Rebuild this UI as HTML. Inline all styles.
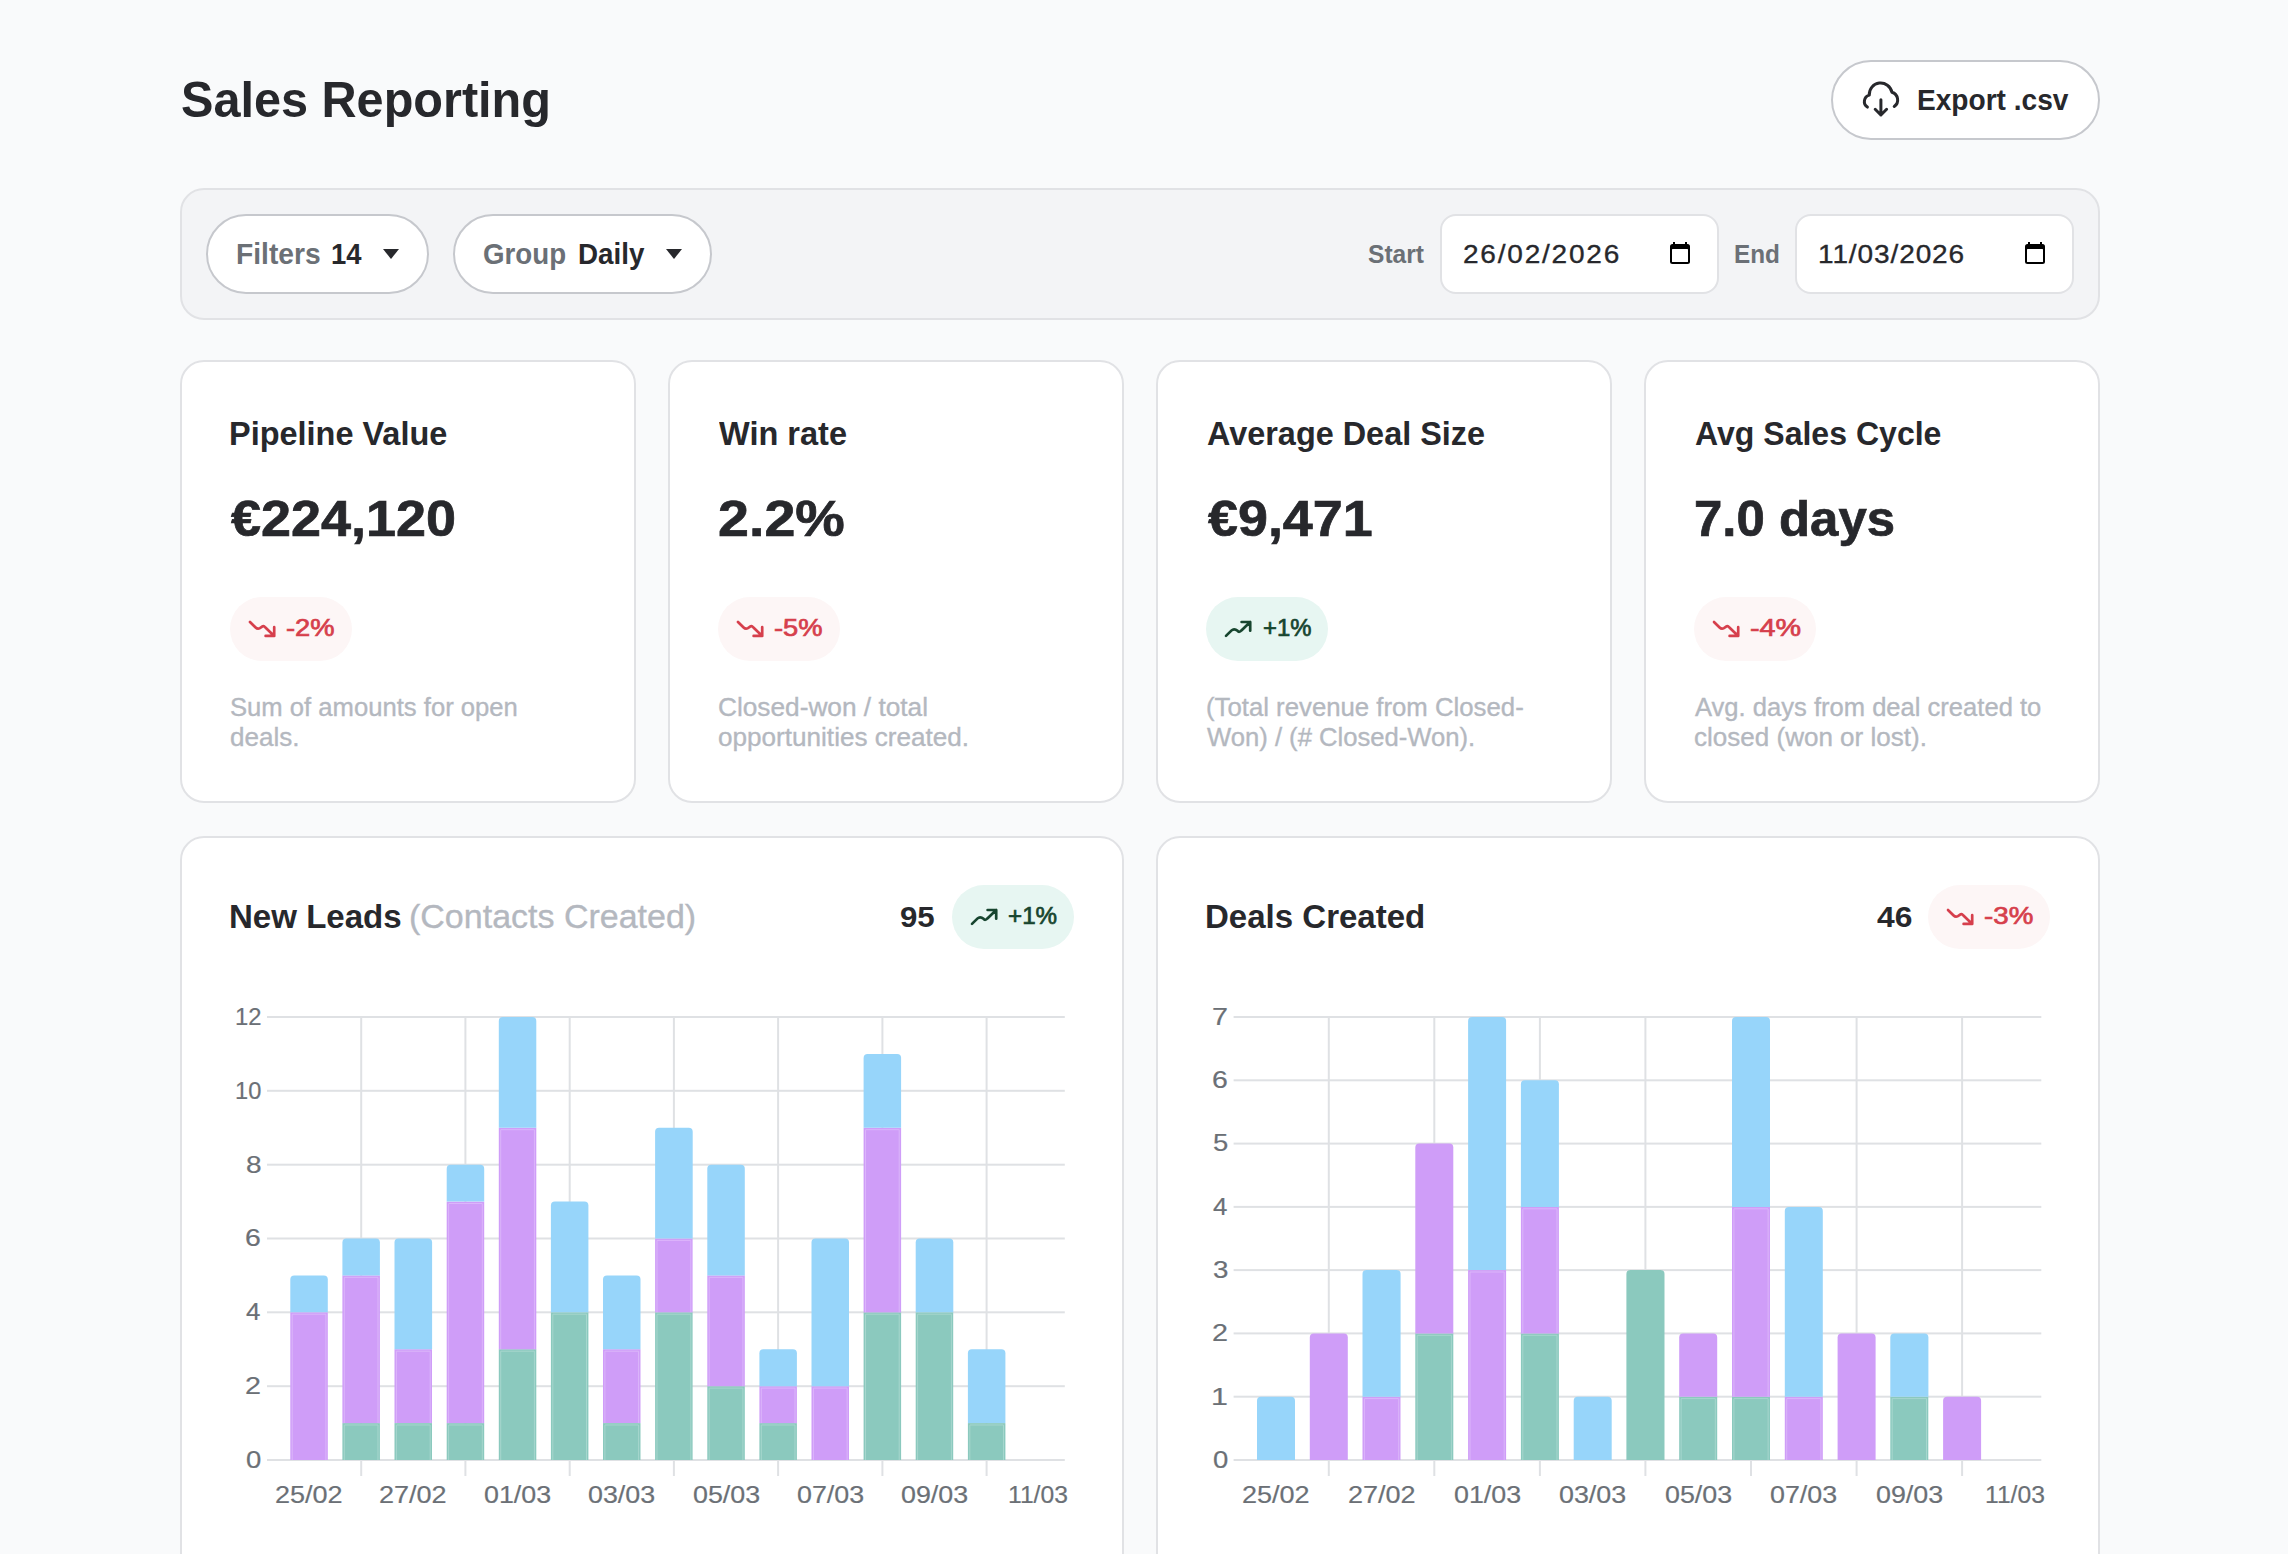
<!DOCTYPE html>
<html lang="en"><head><meta charset="utf-8"><title>Sales Reporting</title>
<style>
html,body{margin:0;padding:0}
body{width:2288px;height:1554px;overflow:hidden;background:#f9fafb;position:relative;font-family:"Liberation Sans",sans-serif}
.b{position:absolute;box-sizing:border-box}
.t{position:absolute;line-height:1;white-space:nowrap;transform-origin:0 50%}
svg.o{position:absolute;left:0;top:0}
</style></head><body>
<div class="b" style="left:1831px;top:60px;width:269px;height:80px;background:#fff;border-radius:40px;border:2px solid #c6c8cd;"></div>
<div class="b" style="left:180px;top:188px;width:1920px;height:132px;background:#f3f4f6;border-radius:24px;border:2px solid #e1e2e5;"></div>
<div class="b" style="left:206px;top:214px;width:223px;height:80px;background:#fff;border-radius:40px;border:2px solid #c6c8cd;"></div>
<div class="b" style="left:453px;top:214px;width:259px;height:80px;background:#fff;border-radius:40px;border:2px solid #c6c8cd;"></div>
<div class="b" style="left:1440px;top:214px;width:279px;height:80px;background:#fff;border-radius:16px;border:2px solid #e1e2e5;"></div>
<div class="b" style="left:1795px;top:214px;width:279px;height:80px;background:#fff;border-radius:16px;border:2px solid #e1e2e5;"></div>
<div class="b" style="left:180px;top:360px;width:456px;height:443px;background:#fff;border-radius:24px;border:2px solid #e1e2e5;"></div>
<div class="b" style="left:668px;top:360px;width:456px;height:443px;background:#fff;border-radius:24px;border:2px solid #e1e2e5;"></div>
<div class="b" style="left:1156px;top:360px;width:456px;height:443px;background:#fff;border-radius:24px;border:2px solid #e1e2e5;"></div>
<div class="b" style="left:1644px;top:360px;width:456px;height:443px;background:#fff;border-radius:24px;border:2px solid #e1e2e5;"></div>
<div class="b" style="left:180px;top:836px;width:944px;height:800px;background:#fff;border-radius:24px;border:2px solid #e1e2e5;"></div>
<div class="b" style="left:1156px;top:836px;width:944px;height:800px;background:#fff;border-radius:24px;border:2px solid #e1e2e5;"></div>
<div class="b" style="left:230px;top:597px;width:122px;height:64px;background:#fdf6f6;border-radius:32px;"></div>
<div class="b" style="left:718px;top:597px;width:122px;height:64px;background:#fdf6f6;border-radius:32px;"></div>
<div class="b" style="left:1206px;top:597px;width:122px;height:64px;background:#e7f6f2;border-radius:32px;"></div>
<div class="b" style="left:1694px;top:597px;width:122px;height:64px;background:#fdf6f6;border-radius:32px;"></div>
<div class="b" style="left:952px;top:885px;width:122px;height:64px;background:#e7f6f2;border-radius:32px;"></div>
<div class="b" style="left:1928px;top:885px;width:122px;height:64px;background:#fdf6f6;border-radius:32px;"></div>
<svg class="o" width="2288" height="1554" viewBox="0 0 2288 1554">
<rect x="267.0" y="1459.0" width="797.8" height="2" fill="#dfe1e4"/>
<rect x="267.0" y="1385.2" width="797.8" height="2" fill="#dfe1e4"/>
<rect x="267.0" y="1311.3" width="797.8" height="2" fill="#dfe1e4"/>
<rect x="267.0" y="1237.5" width="797.8" height="2" fill="#dfe1e4"/>
<rect x="267.0" y="1163.7" width="797.8" height="2" fill="#dfe1e4"/>
<rect x="267.0" y="1089.8" width="797.8" height="2" fill="#dfe1e4"/>
<rect x="267.0" y="1016.0" width="797.8" height="2" fill="#dfe1e4"/>
<rect x="360.2" y="1017.0" width="2" height="459.0" fill="#dfe1e4"/>
<rect x="464.4" y="1017.0" width="2" height="459.0" fill="#dfe1e4"/>
<rect x="568.7" y="1017.0" width="2" height="459.0" fill="#dfe1e4"/>
<rect x="672.9" y="1017.0" width="2" height="459.0" fill="#dfe1e4"/>
<rect x="777.1" y="1017.0" width="2" height="459.0" fill="#dfe1e4"/>
<rect x="881.4" y="1017.0" width="2" height="459.0" fill="#dfe1e4"/>
<rect x="985.6" y="1017.0" width="2" height="459.0" fill="#dfe1e4"/>
<rect x="290.3" y="1312.3" width="37.5" height="147.7" fill="#cf9df8"/>
<path d="M292.2 1460.0V1314.2H325.9V1460.0" fill="none" stroke="#ddb8fb" stroke-width="0.9"/>
<path d="M290.3 1312.3V1279.4a4 4 0 0 1 4 -4H323.8a4 4 0 0 1 4 4V1312.3z" fill="#97d5fa"/>
<rect x="342.4" y="1423.1" width="37.5" height="36.9" fill="#8bc9be"/>
<path d="M344.3 1460.0V1425.0H378.0V1460.0" fill="none" stroke="#a9d8cf" stroke-width="0.9"/>
<rect x="342.4" y="1275.4" width="37.5" height="147.7" fill="#cf9df8"/>
<path d="M344.3 1423.1V1277.3H378.0V1423.1" fill="none" stroke="#ddb8fb" stroke-width="0.9"/>
<path d="M342.4 1275.4V1242.5a4 4 0 0 1 4 -4H375.9a4 4 0 0 1 4 4V1275.4z" fill="#97d5fa"/>
<rect x="394.5" y="1423.1" width="37.5" height="36.9" fill="#8bc9be"/>
<path d="M396.4 1460.0V1425.0H430.2V1460.0" fill="none" stroke="#a9d8cf" stroke-width="0.9"/>
<rect x="394.5" y="1349.2" width="37.5" height="73.8" fill="#cf9df8"/>
<path d="M396.4 1423.1V1351.2H430.2V1423.1" fill="none" stroke="#ddb8fb" stroke-width="0.9"/>
<path d="M394.5 1349.2V1242.5a4 4 0 0 1 4 -4H428.1a4 4 0 0 1 4 4V1349.2z" fill="#97d5fa"/>
<rect x="446.7" y="1423.1" width="37.5" height="36.9" fill="#8bc9be"/>
<path d="M448.6 1460.0V1425.0H482.3V1460.0" fill="none" stroke="#a9d8cf" stroke-width="0.9"/>
<rect x="446.7" y="1201.6" width="37.5" height="221.5" fill="#cf9df8"/>
<path d="M448.6 1423.1V1203.5H482.3V1423.1" fill="none" stroke="#ddb8fb" stroke-width="0.9"/>
<path d="M446.7 1201.6V1168.7a4 4 0 0 1 4 -4H480.2a4 4 0 0 1 4 4V1201.6z" fill="#97d5fa"/>
<rect x="498.8" y="1349.2" width="37.5" height="110.8" fill="#8bc9be"/>
<path d="M500.7 1460.0V1351.2H534.4V1460.0" fill="none" stroke="#a9d8cf" stroke-width="0.9"/>
<rect x="498.8" y="1127.8" width="37.5" height="221.5" fill="#cf9df8"/>
<path d="M500.7 1349.2V1129.7H534.4V1349.2" fill="none" stroke="#ddb8fb" stroke-width="0.9"/>
<path d="M498.8 1127.8V1021.0a4 4 0 0 1 4 -4H532.3a4 4 0 0 1 4 4V1127.8z" fill="#97d5fa"/>
<rect x="550.9" y="1312.3" width="37.5" height="147.7" fill="#8bc9be"/>
<path d="M552.8 1460.0V1314.2H586.5V1460.0" fill="none" stroke="#a9d8cf" stroke-width="0.9"/>
<path d="M550.9 1312.3V1205.6a4 4 0 0 1 4 -4H584.4a4 4 0 0 1 4 4V1312.3z" fill="#97d5fa"/>
<rect x="603.0" y="1423.1" width="37.5" height="36.9" fill="#8bc9be"/>
<path d="M604.9 1460.0V1425.0H638.6V1460.0" fill="none" stroke="#a9d8cf" stroke-width="0.9"/>
<rect x="603.0" y="1349.2" width="37.5" height="73.8" fill="#cf9df8"/>
<path d="M604.9 1423.1V1351.2H638.6V1423.1" fill="none" stroke="#ddb8fb" stroke-width="0.9"/>
<path d="M603.0 1349.2V1279.4a4 4 0 0 1 4 -4H636.5a4 4 0 0 1 4 4V1349.2z" fill="#97d5fa"/>
<rect x="655.1" y="1312.3" width="37.5" height="147.7" fill="#8bc9be"/>
<path d="M657.0 1460.0V1314.2H690.8V1460.0" fill="none" stroke="#a9d8cf" stroke-width="0.9"/>
<rect x="655.1" y="1238.5" width="37.5" height="73.8" fill="#cf9df8"/>
<path d="M657.0 1312.3V1240.4H690.8V1312.3" fill="none" stroke="#ddb8fb" stroke-width="0.9"/>
<path d="M655.1 1238.5V1131.8a4 4 0 0 1 4 -4H688.7a4 4 0 0 1 4 4V1238.5z" fill="#97d5fa"/>
<rect x="707.3" y="1386.2" width="37.5" height="73.8" fill="#8bc9be"/>
<path d="M709.2 1460.0V1388.1H742.9V1460.0" fill="none" stroke="#a9d8cf" stroke-width="0.9"/>
<rect x="707.3" y="1275.4" width="37.5" height="110.8" fill="#cf9df8"/>
<path d="M709.2 1386.2V1277.3H742.9V1386.2" fill="none" stroke="#ddb8fb" stroke-width="0.9"/>
<path d="M707.3 1275.4V1168.7a4 4 0 0 1 4 -4H740.8a4 4 0 0 1 4 4V1275.4z" fill="#97d5fa"/>
<rect x="759.4" y="1423.1" width="37.5" height="36.9" fill="#8bc9be"/>
<path d="M761.3 1460.0V1425.0H795.0V1460.0" fill="none" stroke="#a9d8cf" stroke-width="0.9"/>
<rect x="759.4" y="1386.2" width="37.5" height="36.9" fill="#cf9df8"/>
<path d="M761.3 1423.1V1388.1H795.0V1423.1" fill="none" stroke="#ddb8fb" stroke-width="0.9"/>
<path d="M759.4 1386.2V1353.2a4 4 0 0 1 4 -4H792.9a4 4 0 0 1 4 4V1386.2z" fill="#97d5fa"/>
<rect x="811.5" y="1386.2" width="37.5" height="73.8" fill="#cf9df8"/>
<path d="M813.4 1460.0V1388.1H847.1V1460.0" fill="none" stroke="#ddb8fb" stroke-width="0.9"/>
<path d="M811.5 1386.2V1242.5a4 4 0 0 1 4 -4H845.0a4 4 0 0 1 4 4V1386.2z" fill="#97d5fa"/>
<rect x="863.6" y="1312.3" width="37.5" height="147.7" fill="#8bc9be"/>
<path d="M865.5 1460.0V1314.2H899.2V1460.0" fill="none" stroke="#a9d8cf" stroke-width="0.9"/>
<rect x="863.6" y="1127.8" width="37.5" height="184.6" fill="#cf9df8"/>
<path d="M865.5 1312.3V1129.7H899.2V1312.3" fill="none" stroke="#ddb8fb" stroke-width="0.9"/>
<path d="M863.6 1127.8V1057.9a4 4 0 0 1 4 -4H897.1a4 4 0 0 1 4 4V1127.8z" fill="#97d5fa"/>
<rect x="915.7" y="1312.3" width="37.5" height="147.7" fill="#8bc9be"/>
<path d="M917.6 1460.0V1314.2H951.4V1460.0" fill="none" stroke="#a9d8cf" stroke-width="0.9"/>
<path d="M915.7 1312.3V1242.5a4 4 0 0 1 4 -4H949.3a4 4 0 0 1 4 4V1312.3z" fill="#97d5fa"/>
<rect x="967.9" y="1423.1" width="37.5" height="36.9" fill="#8bc9be"/>
<path d="M969.8 1460.0V1425.0H1003.5V1460.0" fill="none" stroke="#a9d8cf" stroke-width="0.9"/>
<path d="M967.9 1423.1V1353.2a4 4 0 0 1 4 -4H1001.4a4 4 0 0 1 4 4V1423.1z" fill="#97d5fa"/>
<rect x="1233.6" y="1459.0" width="807.7" height="2" fill="#dfe1e4"/>
<rect x="1233.6" y="1395.7" width="807.7" height="2" fill="#dfe1e4"/>
<rect x="1233.6" y="1332.4" width="807.7" height="2" fill="#dfe1e4"/>
<rect x="1233.6" y="1269.1" width="807.7" height="2" fill="#dfe1e4"/>
<rect x="1233.6" y="1205.9" width="807.7" height="2" fill="#dfe1e4"/>
<rect x="1233.6" y="1142.6" width="807.7" height="2" fill="#dfe1e4"/>
<rect x="1233.6" y="1079.3" width="807.7" height="2" fill="#dfe1e4"/>
<rect x="1233.6" y="1016.0" width="807.7" height="2" fill="#dfe1e4"/>
<rect x="1327.8" y="1017.0" width="2" height="459.0" fill="#dfe1e4"/>
<rect x="1433.3" y="1017.0" width="2" height="459.0" fill="#dfe1e4"/>
<rect x="1538.9" y="1017.0" width="2" height="459.0" fill="#dfe1e4"/>
<rect x="1644.4" y="1017.0" width="2" height="459.0" fill="#dfe1e4"/>
<rect x="1750.0" y="1017.0" width="2" height="459.0" fill="#dfe1e4"/>
<rect x="1855.6" y="1017.0" width="2" height="459.0" fill="#dfe1e4"/>
<rect x="1961.1" y="1017.0" width="2" height="459.0" fill="#dfe1e4"/>
<path d="M1257.0 1460.0V1400.7a4 4 0 0 1 4 -4H1291.0a4 4 0 0 1 4 4V1460.0z" fill="#97d5fa"/>
<path d="M1309.8 1460.0V1337.4a4 4 0 0 1 4 -4H1343.8a4 4 0 0 1 4 4V1460.0z" fill="#cf9df8"/>
<rect x="1362.5" y="1396.7" width="38.0" height="63.3" fill="#cf9df8"/>
<path d="M1364.4 1460.0V1398.6H1398.7V1460.0" fill="none" stroke="#ddb8fb" stroke-width="0.9"/>
<path d="M1362.5 1396.7V1274.1a4 4 0 0 1 4 -4H1396.6a4 4 0 0 1 4 4V1396.7z" fill="#97d5fa"/>
<rect x="1415.3" y="1333.4" width="38.0" height="126.6" fill="#8bc9be"/>
<path d="M1417.2 1460.0V1335.3H1451.4V1460.0" fill="none" stroke="#a9d8cf" stroke-width="0.9"/>
<path d="M1415.3 1333.4V1147.6a4 4 0 0 1 4 -4H1449.3a4 4 0 0 1 4 4V1333.4z" fill="#cf9df8"/>
<rect x="1468.1" y="1270.1" width="38.0" height="189.9" fill="#cf9df8"/>
<path d="M1470.0 1460.0V1272.0H1504.2V1460.0" fill="none" stroke="#ddb8fb" stroke-width="0.9"/>
<path d="M1468.1 1270.1V1021.0a4 4 0 0 1 4 -4H1502.1a4 4 0 0 1 4 4V1270.1z" fill="#97d5fa"/>
<rect x="1520.9" y="1333.4" width="38.0" height="126.6" fill="#8bc9be"/>
<path d="M1522.8 1460.0V1335.3H1557.0V1460.0" fill="none" stroke="#a9d8cf" stroke-width="0.9"/>
<rect x="1520.9" y="1206.9" width="38.0" height="126.6" fill="#cf9df8"/>
<path d="M1522.8 1333.4V1208.8H1557.0V1333.4" fill="none" stroke="#ddb8fb" stroke-width="0.9"/>
<path d="M1520.9 1206.9V1084.3a4 4 0 0 1 4 -4H1554.9a4 4 0 0 1 4 4V1206.9z" fill="#97d5fa"/>
<path d="M1573.7 1460.0V1400.7a4 4 0 0 1 4 -4H1607.7a4 4 0 0 1 4 4V1460.0z" fill="#97d5fa"/>
<path d="M1626.4 1460.0V1274.1a4 4 0 0 1 4 -4H1660.5a4 4 0 0 1 4 4V1460.0z" fill="#8bc9be"/>
<rect x="1679.2" y="1396.7" width="38.0" height="63.3" fill="#8bc9be"/>
<path d="M1681.1 1460.0V1398.6H1715.3V1460.0" fill="none" stroke="#a9d8cf" stroke-width="0.9"/>
<path d="M1679.2 1396.7V1337.4a4 4 0 0 1 4 -4H1713.2a4 4 0 0 1 4 4V1396.7z" fill="#cf9df8"/>
<rect x="1732.0" y="1396.7" width="38.0" height="63.3" fill="#8bc9be"/>
<path d="M1733.9 1460.0V1398.6H1768.1V1460.0" fill="none" stroke="#a9d8cf" stroke-width="0.9"/>
<rect x="1732.0" y="1206.9" width="38.0" height="189.9" fill="#cf9df8"/>
<path d="M1733.9 1396.7V1208.8H1768.1V1396.7" fill="none" stroke="#ddb8fb" stroke-width="0.9"/>
<path d="M1732.0 1206.9V1021.0a4 4 0 0 1 4 -4H1766.0a4 4 0 0 1 4 4V1206.9z" fill="#97d5fa"/>
<rect x="1784.8" y="1396.7" width="38.0" height="63.3" fill="#cf9df8"/>
<path d="M1786.7 1460.0V1398.6H1820.9V1460.0" fill="none" stroke="#ddb8fb" stroke-width="0.9"/>
<path d="M1784.8 1396.7V1210.9a4 4 0 0 1 4 -4H1818.8a4 4 0 0 1 4 4V1396.7z" fill="#97d5fa"/>
<path d="M1837.6 1460.0V1337.4a4 4 0 0 1 4 -4H1871.6a4 4 0 0 1 4 4V1460.0z" fill="#cf9df8"/>
<rect x="1890.3" y="1396.7" width="38.0" height="63.3" fill="#8bc9be"/>
<path d="M1892.2 1460.0V1398.6H1926.5V1460.0" fill="none" stroke="#a9d8cf" stroke-width="0.9"/>
<path d="M1890.3 1396.7V1337.4a4 4 0 0 1 4 -4H1924.4a4 4 0 0 1 4 4V1396.7z" fill="#97d5fa"/>
<path d="M1943.1 1460.0V1400.7a4 4 0 0 1 4 -4H1977.1a4 4 0 0 1 4 4V1460.0z" fill="#cf9df8"/>
<g fill="none" stroke="#27282c" stroke-width="3" stroke-linecap="round" stroke-linejoin="round"><path d="M1867.4 107.1A6.65 6.65 0 0 1 1869.3 95.1A11.42 11.42 0 0 1 1891.9 92.2A8.03 8.03 0 0 1 1894.2 106.5"/><path d="M1880.9 99.7V115M1875.2 109.3L1880.9 115L1886.6 109.3"/></g>
<path d="M383 249h16l-8 10z" fill="#27282c"/>
<path d="M666 249h16l-8 10z" fill="#27282c"/>
<g><rect x="1670" y="244" width="20" height="20" rx="2.5" fill="#000"/><rect x="1672" y="249" width="16" height="13" rx="0.5" fill="#fff"/><rect x="1673" y="242" width="2" height="3" fill="#000"/><rect x="1685" y="242" width="2" height="3" fill="#000"/></g>
<g><rect x="2025" y="244" width="20" height="20" rx="2.5" fill="#000"/><rect x="2027" y="249" width="16" height="13" rx="0.5" fill="#fff"/><rect x="2028" y="242" width="2" height="3" fill="#000"/><rect x="2040" y="242" width="2" height="3" fill="#000"/></g>
<g transform="translate(230 597)" fill="none" stroke="#d63f4c" stroke-width="2.7" stroke-linecap="round" stroke-linejoin="round"><path d="M20 25L25.6 30.5Q27.6 32.4 29.9 31.1L31.4 30.2Q33.2 27.9 35.4 30.5L44.2 38.9M35.6 38.9H44.2V30.2"/></g>
<g transform="translate(718 597)" fill="none" stroke="#d63f4c" stroke-width="2.7" stroke-linecap="round" stroke-linejoin="round"><path d="M20 25L25.6 30.5Q27.6 32.4 29.9 31.1L31.4 30.2Q33.2 27.9 35.4 30.5L44.2 38.9M35.6 38.9H44.2V30.2"/></g>
<g transform="translate(1206 597)" fill="none" stroke="#17452f" stroke-width="2.7" stroke-linecap="round" stroke-linejoin="round"><path d="M20 38.9L25.6 33.4Q27.6 31.5 29.9 32.8L31.4 33.7Q33.2 36 35.4 33.4L44.2 25M35.6 25H44.2V33.7"/></g>
<g transform="translate(1694 597)" fill="none" stroke="#d63f4c" stroke-width="2.7" stroke-linecap="round" stroke-linejoin="round"><path d="M20 25L25.6 30.5Q27.6 32.4 29.9 31.1L31.4 30.2Q33.2 27.9 35.4 30.5L44.2 38.9M35.6 38.9H44.2V30.2"/></g>
<g transform="translate(952 885)" fill="none" stroke="#17452f" stroke-width="2.7" stroke-linecap="round" stroke-linejoin="round"><path d="M20 38.9L25.6 33.4Q27.6 31.5 29.9 32.8L31.4 33.7Q33.2 36 35.4 33.4L44.2 25M35.6 25H44.2V33.7"/></g>
<g transform="translate(1928 885)" fill="none" stroke="#d63f4c" stroke-width="2.7" stroke-linecap="round" stroke-linejoin="round"><path d="M20 25L25.6 30.5Q27.6 32.4 29.9 31.1L31.4 30.2Q33.2 27.9 35.4 30.5L44.2 38.9M35.6 38.9H44.2V30.2"/></g>
</svg>
<span class="t" style="left:180.64px;top:74.54px;font-size:50.4px;font-weight:700;color:#27282c;transform:scaleX(0.9645)">Sales Reporting</span>
<span class="t" style="left:1916.84px;top:84.81px;font-size:29.4px;font-weight:700;color:#27282c;transform:scaleX(0.9557)">Export .csv</span>
<span class="t" style="left:235.74px;top:239.31px;font-size:29.4px;font-weight:700;color:#6b7076;transform:scaleX(0.9601)">Filters</span>
<span class="t" style="left:330.68px;top:239.31px;font-size:29.4px;font-weight:700;color:#27282c;transform:scaleX(0.9340)">14</span>
<span class="t" style="left:483.03px;top:239.31px;font-size:29.4px;font-weight:700;color:#6b7076;transform:scaleX(0.9420)">Group</span>
<span class="t" style="left:577.86px;top:239.31px;font-size:29.4px;font-weight:700;color:#27282c;transform:scaleX(0.9458)">Daily</span>
<span class="t" style="left:1367.72px;top:241.57px;font-size:25.2px;font-weight:700;color:#6b7076;transform:scaleX(0.9748)">Start</span>
<span class="t" style="left:1733.75px;top:241.57px;font-size:25.2px;font-weight:700;color:#6b7076;transform:scaleX(0.9662)">End</span>
<span class="t" style="left:1463.19px;top:241.20px;font-size:26.46px;font-weight:400;color:#27282c;transform:scaleX(1.0600);letter-spacing:1.67px;-webkit-text-stroke:0.35px #27282c">26/02/2026</span>
<span class="t" style="left:1817.55px;top:241.20px;font-size:26.46px;font-weight:400;color:#27282c;transform:scaleX(1.0600);letter-spacing:0.83px;-webkit-text-stroke:0.35px #27282c">11/03/2026</span>
<span class="t" style="left:229.17px;top:417.16px;font-size:33.6px;font-weight:700;color:#27282c;transform:scaleX(0.9667)">Pipeline Value</span>
<span class="t" style="left:719.40px;top:417.16px;font-size:33.6px;font-weight:700;color:#27282c;transform:scaleX(0.9687)">Win rate</span>
<span class="t" style="left:1206.59px;top:417.16px;font-size:33.6px;font-weight:700;color:#27282c;transform:scaleX(0.9652)">Average Deal Size</span>
<span class="t" style="left:1694.70px;top:417.16px;font-size:33.6px;font-weight:700;color:#27282c;transform:scaleX(0.9545)">Avg Sales Cycle</span>
<span class="t" style="left:230.90px;top:493.54px;font-size:50.4px;font-weight:700;color:#27282c;transform:scaleX(1.0712);-webkit-text-stroke:0.7px #27282c">€224,120</span>
<span class="t" style="left:717.66px;top:493.54px;font-size:50.4px;font-weight:700;color:#27282c;transform:scaleX(1.1040);-webkit-text-stroke:0.7px #27282c">2.2%</span>
<span class="t" style="left:1208.00px;top:493.54px;font-size:50.4px;font-weight:700;color:#27282c;transform:scaleX(1.0687);-webkit-text-stroke:0.7px #27282c">€9,471</span>
<span class="t" style="left:1693.61px;top:493.54px;font-size:50.4px;font-weight:700;color:#27282c;transform:scaleX(1.0111);-webkit-text-stroke:0.7px #27282c">7.0 days</span>
<span class="t" style="left:285.99px;top:616.10px;font-size:24.57px;font-weight:400;color:#d63f4c;transform:scaleX(1.1112);-webkit-text-stroke:0.7px #d63f4c">-2%</span>
<span class="t" style="left:773.99px;top:616.10px;font-size:24.57px;font-weight:400;color:#d63f4c;transform:scaleX(1.1112);-webkit-text-stroke:0.7px #d63f4c">-5%</span>
<span class="t" style="left:1262.63px;top:616.10px;font-size:24.57px;font-weight:400;color:#17452f;transform:scaleX(0.9726);-webkit-text-stroke:0.7px #17452f">+1%</span>
<span class="t" style="left:1749.93px;top:616.10px;font-size:24.57px;font-weight:400;color:#d63f4c;transform:scaleX(1.1710);-webkit-text-stroke:0.7px #d63f4c">-4%</span>
<span class="t" style="left:229.68px;top:694.87px;font-size:25.2px;font-weight:400;color:#b4b8bf;transform:scaleX(1.0177);-webkit-text-stroke:0.35px #b4b8bf">Sum of amounts for open</span>
<span class="t" style="left:229.77px;top:724.87px;font-size:25.2px;font-weight:400;color:#b4b8bf;transform:scaleX(1.0337);-webkit-text-stroke:0.35px #b4b8bf">deals.</span>
<span class="t" style="left:717.75px;top:694.87px;font-size:25.2px;font-weight:400;color:#b4b8bf;transform:scaleX(1.0417);-webkit-text-stroke:0.35px #b4b8bf">Closed-won / total</span>
<span class="t" style="left:717.96px;top:724.87px;font-size:25.2px;font-weight:400;color:#b4b8bf;transform:scaleX(1.0366);-webkit-text-stroke:0.35px #b4b8bf">opportunities created.</span>
<span class="t" style="left:1206.07px;top:694.87px;font-size:25.2px;font-weight:400;color:#b4b8bf;transform:scaleX(1.0223);-webkit-text-stroke:0.35px #b4b8bf">(Total revenue from Closed-</span>
<span class="t" style="left:1206.90px;top:724.87px;font-size:25.2px;font-weight:400;color:#b4b8bf;transform:scaleX(1.0174);-webkit-text-stroke:0.35px #b4b8bf">Won) / (# Closed-Won).</span>
<span class="t" style="left:1694.60px;top:694.87px;font-size:25.2px;font-weight:400;color:#b4b8bf;transform:scaleX(1.0150);-webkit-text-stroke:0.35px #b4b8bf">Avg. days from deal created to</span>
<span class="t" style="left:1693.87px;top:724.87px;font-size:25.2px;font-weight:400;color:#b4b8bf;transform:scaleX(1.0334);-webkit-text-stroke:0.35px #b4b8bf">closed (won or lost).</span>
<span class="t" style="left:228.53px;top:899.76px;font-size:33.6px;font-weight:700;color:#27282c;transform:scaleX(0.9845)">New Leads</span>
<span class="t" style="left:409.41px;top:899.76px;font-size:33.6px;font-weight:400;color:#b4b8bf;transform:scaleX(1.0124);-webkit-text-stroke:0.35px #b4b8bf">(Contacts Created)</span>
<span class="t" style="left:1204.53px;top:899.76px;font-size:33.6px;font-weight:700;color:#27282c;transform:scaleX(0.9834)">Deals Created</span>
<span class="t" style="left:900.42px;top:901.81px;font-size:29.4px;font-weight:700;color:#27282c;transform:scaleX(1.0628)">95</span>
<span class="t" style="left:1876.60px;top:901.81px;font-size:29.4px;font-weight:700;color:#27282c;transform:scaleX(1.0823)">46</span>
<span class="t" style="left:1008.12px;top:904.10px;font-size:24.57px;font-weight:400;color:#17452f;transform:scaleX(0.9851);-webkit-text-stroke:0.7px #17452f">+1%</span>
<span class="t" style="left:1984.17px;top:904.10px;font-size:24.57px;font-weight:400;color:#d63f4c;transform:scaleX(1.1280);-webkit-text-stroke:0.7px #d63f4c">-3%</span>
<span class="t" style="left:245.78px;top:1447.86px;font-size:24.15px;font-weight:400;color:#6b7076;transform:scaleX(1.1379);-webkit-text-stroke:0.2px #6b7076">0</span>
<span class="t" style="left:245.37px;top:1374.02px;font-size:24.15px;font-weight:400;color:#6b7076;transform:scaleX(1.1892);-webkit-text-stroke:0.2px #6b7076">2</span>
<span class="t" style="left:246.26px;top:1300.19px;font-size:24.15px;font-weight:400;color:#6b7076;transform:scaleX(1.0732);-webkit-text-stroke:0.2px #6b7076">4</span>
<span class="t" style="left:245.39px;top:1226.36px;font-size:24.15px;font-weight:400;color:#6b7076;transform:scaleX(1.1786);-webkit-text-stroke:0.2px #6b7076">6</span>
<span class="t" style="left:245.64px;top:1152.52px;font-size:24.15px;font-weight:400;color:#6b7076;transform:scaleX(1.1579);-webkit-text-stroke:0.2px #6b7076">8</span>
<span class="t" style="left:234.64px;top:1078.69px;font-size:24.15px;font-weight:400;color:#6b7076;transform:scaleX(0.9780);-webkit-text-stroke:0.2px #6b7076">10</span>
<span class="t" style="left:234.62px;top:1004.86px;font-size:24.15px;font-weight:400;color:#6b7076;transform:scaleX(0.9862);-webkit-text-stroke:0.2px #6b7076">12</span>
<span class="t" style="left:275.22px;top:1483.26px;font-size:24.15px;font-weight:400;color:#6b7076;transform:scaleX(1.1187);-webkit-text-stroke:0.2px #6b7076">25/02</span>
<span class="t" style="left:379.46px;top:1483.26px;font-size:24.15px;font-weight:400;color:#6b7076;transform:scaleX(1.1187);-webkit-text-stroke:0.2px #6b7076">27/02</span>
<span class="t" style="left:484.04px;top:1483.26px;font-size:24.15px;font-weight:400;color:#6b7076;transform:scaleX(1.1111);-webkit-text-stroke:0.2px #6b7076">01/03</span>
<span class="t" style="left:588.28px;top:1483.26px;font-size:24.15px;font-weight:400;color:#6b7076;transform:scaleX(1.1111);-webkit-text-stroke:0.2px #6b7076">03/03</span>
<span class="t" style="left:692.52px;top:1483.26px;font-size:24.15px;font-weight:400;color:#6b7076;transform:scaleX(1.1111);-webkit-text-stroke:0.2px #6b7076">05/03</span>
<span class="t" style="left:796.76px;top:1483.26px;font-size:24.15px;font-weight:400;color:#6b7076;transform:scaleX(1.1111);-webkit-text-stroke:0.2px #6b7076">07/03</span>
<span class="t" style="left:901.00px;top:1483.26px;font-size:24.15px;font-weight:400;color:#6b7076;transform:scaleX(1.1111);-webkit-text-stroke:0.2px #6b7076">09/03</span>
<span class="t" style="left:1008.40px;top:1483.26px;font-size:24.15px;font-weight:400;color:#6b7076;transform:scaleX(1.0213);-webkit-text-stroke:0.2px #6b7076">11/03</span>
<span class="t" style="left:1212.58px;top:1447.86px;font-size:24.15px;font-weight:400;color:#6b7076;transform:scaleX(1.1379);-webkit-text-stroke:0.2px #6b7076">0</span>
<span class="t" style="left:1211.34px;top:1384.57px;font-size:24.15px;font-weight:400;color:#6b7076;transform:scaleX(1.2571);-webkit-text-stroke:0.2px #6b7076">1</span>
<span class="t" style="left:1212.17px;top:1321.29px;font-size:24.15px;font-weight:400;color:#6b7076;transform:scaleX(1.1892);-webkit-text-stroke:0.2px #6b7076">2</span>
<span class="t" style="left:1212.57px;top:1258.00px;font-size:24.15px;font-weight:400;color:#6b7076;transform:scaleX(1.1478);-webkit-text-stroke:0.2px #6b7076">3</span>
<span class="t" style="left:1213.06px;top:1194.71px;font-size:24.15px;font-weight:400;color:#6b7076;transform:scaleX(1.0732);-webkit-text-stroke:0.2px #6b7076">4</span>
<span class="t" style="left:1212.58px;top:1131.43px;font-size:24.15px;font-weight:400;color:#6b7076;transform:scaleX(1.1379);-webkit-text-stroke:0.2px #6b7076">5</span>
<span class="t" style="left:1212.19px;top:1068.14px;font-size:24.15px;font-weight:400;color:#6b7076;transform:scaleX(1.1786);-webkit-text-stroke:0.2px #6b7076">6</span>
<span class="t" style="left:1212.17px;top:1004.86px;font-size:24.15px;font-weight:400;color:#6b7076;transform:scaleX(1.1892);-webkit-text-stroke:0.2px #6b7076">7</span>
<span class="t" style="left:1242.15px;top:1483.26px;font-size:24.15px;font-weight:400;color:#6b7076;transform:scaleX(1.1187);-webkit-text-stroke:0.2px #6b7076">25/02</span>
<span class="t" style="left:1347.71px;top:1483.26px;font-size:24.15px;font-weight:400;color:#6b7076;transform:scaleX(1.1187);-webkit-text-stroke:0.2px #6b7076">27/02</span>
<span class="t" style="left:1453.61px;top:1483.26px;font-size:24.15px;font-weight:400;color:#6b7076;transform:scaleX(1.1111);-webkit-text-stroke:0.2px #6b7076">01/03</span>
<span class="t" style="left:1559.17px;top:1483.26px;font-size:24.15px;font-weight:400;color:#6b7076;transform:scaleX(1.1111);-webkit-text-stroke:0.2px #6b7076">03/03</span>
<span class="t" style="left:1664.73px;top:1483.26px;font-size:24.15px;font-weight:400;color:#6b7076;transform:scaleX(1.1111);-webkit-text-stroke:0.2px #6b7076">05/03</span>
<span class="t" style="left:1770.29px;top:1483.26px;font-size:24.15px;font-weight:400;color:#6b7076;transform:scaleX(1.1111);-webkit-text-stroke:0.2px #6b7076">07/03</span>
<span class="t" style="left:1875.85px;top:1483.26px;font-size:24.15px;font-weight:400;color:#6b7076;transform:scaleX(1.1111);-webkit-text-stroke:0.2px #6b7076">09/03</span>
<span class="t" style="left:1984.57px;top:1483.26px;font-size:24.15px;font-weight:400;color:#6b7076;transform:scaleX(1.0213);-webkit-text-stroke:0.2px #6b7076">11/03</span>
</body></html>
